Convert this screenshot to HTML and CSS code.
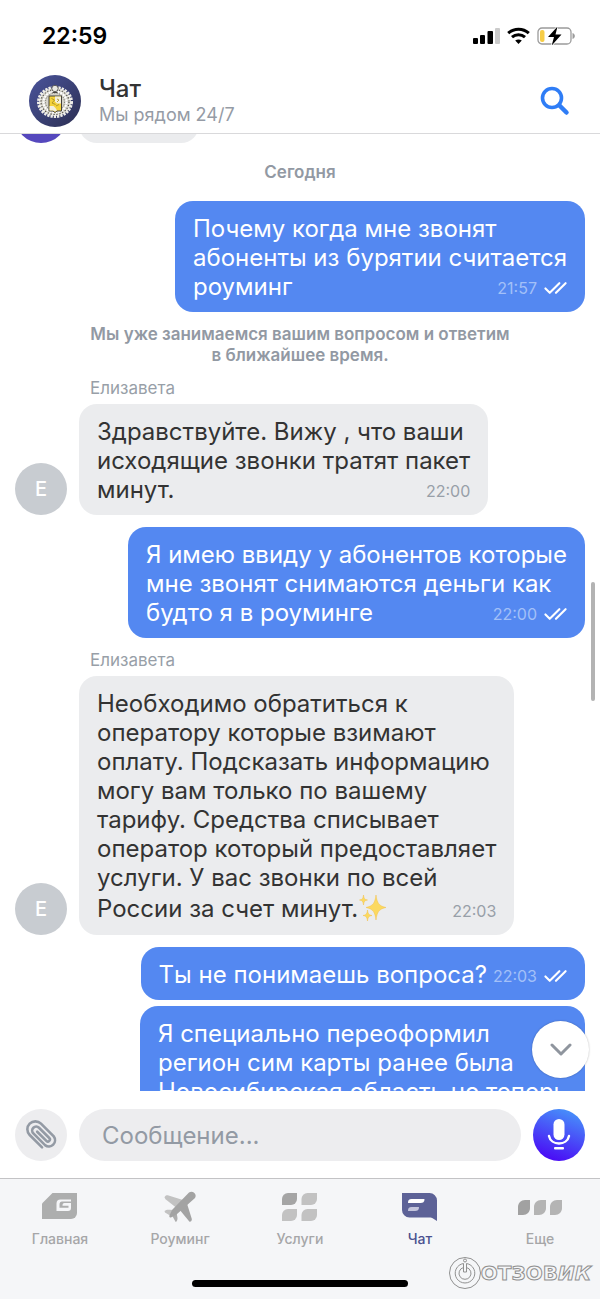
FILE: index.html
```
<!DOCTYPE html>
<html lang="ru">

<head>
  <meta charset="utf-8">
  <meta name="viewport" content="width=device-width">
  <title>Чат</title>
  <link rel="stylesheet" href="styles.css">
</head>

<body>

  <div class="status-bar">
    <span class="clock">22:59</span>
    <div class="status-icons">
      <svg width="27" height="18" viewBox="0 0 27 18">
        <rect x="0" y="11" width="5" height="6" rx="1"/>
        <rect x="7" y="8" width="5" height="9" rx="1"/>
        <rect x="14.500" y="4" width="5.500" height="13" rx="1"/>
        <rect x="22" y="1" width="5" height="16" rx="1" fill="#cbcbcb"/>
      </svg>
      <svg width="23" height="18" viewBox="0 0 23 18" fill="none" stroke="#000" stroke-width="3">
        <path d="M1.200 6.200C7 .8 16 .8 21.800 6.200"/>
        <path d="M5 10.200c3.700-3.400 9.300-3.400 13 0"/>
        <path d="M8.200 13.600c2-1.600 4.600-1.600 6.600 0L11.500 17z" fill="#000" stroke="none"/>
      </svg>
      <svg width="39" height="18" viewBox="0 0 39 18">
        <rect x="1" y="1" width="33" height="16" rx="4" fill="none" stroke="#9b9b9b" stroke-width="1.300"/>
        <rect x="3" y="3" width="4.500" height="12" rx="2" fill="#f7cd46"/>
        <path d="M35.500 6v6c1.600-.6 2.300-1.600 2.300-3s-.7-2.400-2.300-3z" fill="#9b9b9b"/>
        <path d="M20.500-.5 11 10h6l-2.300 8.500L24.500 7.500h-6z" stroke="#fff" stroke-width="1.500" paint-order="stroke"/>
      </svg>
    </div>
  </div>

  <header class="header">
    <svg class="logo" viewBox="0 0 52 52">
      <defs>
        <linearGradient id="logoBg" x1="0" y1="0" x2="1" y2="1">
          <stop offset="0" stop-color="#4a549c"/>
          <stop offset="1" stop-color="#2c2f52"/>
        </linearGradient>
      </defs>
      <circle cx="26" cy="26" r="26" fill="url(#logoBg)"/>
      <ellipse cx="26" cy="27" rx="16" ry="14" fill="#d5d3ca" stroke="#efeee8" stroke-width="4" stroke-dasharray="2.200 1"/>
      <ellipse cx="26" cy="27" rx="14" ry="12.500" fill="none" stroke="#4a4740" stroke-width="1.200" stroke-dasharray="1.200 1.800"/>
      <ellipse cx="26" cy="27" rx="11.500" ry="10.500" fill="none" stroke="#fff" stroke-width="2" stroke-dasharray="2 1"/>
      <ellipse cx="26" cy="27" rx="9.500" ry="9" fill="none" stroke="#6b6860" stroke-width="1" stroke-dasharray="1 1.500"/>
      <circle cx="26" cy="13.500" r="3.200" fill="#e9e8e2" stroke="#45433f" stroke-width=".8"/>
      <path d="M23.500 17.500h5" stroke="#45433f"/>
      <path d="M20 21h12.500v15H28l-2 1.500-2-1.500h-4z" fill="#f4d23c" stroke="#45423a"/>
      <path d="M26 21.500h6v7h-4l-2-2z" fill="#f3efdc"/>
      <path d="M20.500 31l4 0 2 2 1.500 2.500-2 1-2-1h-3.500z" fill="#f3efdc"/>
      <path d="M22.500 23.500l3 1.500-2.500 3 3.500 1.500M27 31l3-1.500M28 24l2 1-2 2" fill="none" stroke="#a38a20" stroke-width=".8"/>
    </svg>
    <div class="header-text">
      <h1>Чат</h1>
      <p>Мы рядом 24/7</p>
    </div>
    <button class="search" aria-label="Поиск">
      <svg width="30" height="30" viewBox="0 0 30 30" fill="none" stroke="#2f7df6" stroke-linecap="round">
        <circle cx="12" cy="12" r="9.500" stroke-width="3.600"/>
        <path d="M19.500 19.500l7 7" stroke-width="4.500"/>
      </svg>
    </button>
  </header>

  <!-- one check mark pair is shared by every sent message -->
  <svg class="defs">
    <symbol id="checks" viewBox="0 0 24 14">
      <path d="M1.500 7.500l4.500 4.500L16 2M12.500 12l10-10" fill="none" stroke="#fff" stroke-width="2.200" stroke-linecap="round" stroke-linejoin="round"/>
    </symbol>
  </svg>

  <main class="chat">
    <div class="messages">

      <div class="row cut">
        <span class="avatar purple"></span>
        <div class="bubble in short"></div>
      </div>

      <p class="note day">Сегодня</p>

      <div class="row sent">
        <div class="bubble out">Почему когда мне звонят<br>абоненты из бурятии считается<br>роуминг
          <span class="meta">21:57 <svg><use href="#checks"/></svg></span>
        </div>
      </div>

      <p class="note">Мы уже занимаемся вашим вопросом и ответим<br>в ближайшее время.</p>

      <p class="author">Елизавета</p>
      <div class="row">
        <span class="avatar">Е</span>
        <div class="bubble in">Здравствуйте. Вижу , что ваши<br>исходящие звонки тратят пакет<br>минут.
          <span class="meta">22:00</span>
        </div>
      </div>

      <div class="row sent">
        <div class="bubble out">Я имею ввиду у абонентов которые<br>мне звонят снимаются деньги как<br>будто я в роуминге
          <span class="meta">22:00 <svg><use href="#checks"/></svg></span>
        </div>
      </div>

      <p class="author">Елизавета</p>
      <div class="row">
        <span class="avatar">Е</span>
        <div class="bubble in">Необходимо обратиться к<br>оператору которые взимают<br>оплату. Подсказать информацию<br>могу вам только по вашему<br>тарифу. Средства списывает<br>оператор который предоставляет<br>услуги. У вас звонки по всей<br>России за счет минут.<svg class="sparkles" viewBox="0 0 30 30">
            <g fill="#fbd960" stroke="#f3c14b" stroke-width=".5">
              <path d="M18 2c1 8 3 11 10 12.500C21 16 19 19 18 27c-1-8-3-11-10-12.500C15 13 17 10 18 2z"/>
              <path d="M5.500 2c.5 3.500 1 4.500 4 5-3 .5-3.500 1.500-4 5-.5-3.500-1-4.500-4-5 3-.5 3.500-1.500 4-5z"/>
              <path d="M9.500 17c.5 4 1.500 5 4.500 5.500-3 .5-4 1.500-4.500 5.500-.5-4-1.500-5-4.500-5.500 3-.5 4-1.500 4.500-5.500z"/>
            </g>
          </svg>
          <span class="meta">22:03</span>
        </div>
      </div>

      <div class="row sent">
        <div class="bubble out">Ты не понимаешь вопроса?<span class="meta-space"></span>
          <span class="meta">22:03 <svg><use href="#checks"/></svg></span>
        </div>
      </div>

      <div class="row sent next">
        <div class="bubble out">Я специально переоформил<br>регион сим карты ранее была<br>Новосибирская область но теперь</div>
      </div>

    </div>

    <span class="scrollbar"></span>
    <button class="to-bottom" aria-label="Вниз">
      <svg width="24" height="14" viewBox="0 0 24 14" fill="none" stroke="#8f959e" stroke-width="3" stroke-linecap="round" stroke-linejoin="round">
        <path d="M3 2l9 9 9-9"/>
      </svg>
    </button>
  </main>

  <form class="composer" onsubmit="return false">
    <button type="button" class="attach" aria-label="Прикрепить файл">
      <svg width="32" height="32" viewBox="0 0 32 32" fill="none" stroke="#939aa4" stroke-width="2.600" stroke-linecap="round">
        <path transform="translate(16 16) rotate(45)" d="M9.500 8H-8A8 8 0 0 1-8-8H10A6.200 6.200 0 0 1 10 4.300H-6.500A4 4 0 0 1-6.500-3.700H8A2 2 0 0 1 8 .4H-5"/>
      </svg>
    </button>
    <input type="text" placeholder="Сообщение..." aria-label="Сообщение">
    <button class="mic" aria-label="Голосовое сообщение">
      <svg width="24" height="32" viewBox="0 0 24 32">
        <rect x="6.500" y="0" width="11" height="21" rx="5.500" fill="#fff"/>
        <path d="M2 17c2 10 18 10 20 0" fill="none" stroke="#fff" stroke-width="2.400" stroke-linecap="round"/>
        <rect x="7" y="28" width="10" height="2.500" rx="1" fill="#fff"/>
      </svg>
    </button>
  </form>

  <nav class="tabs">
    <a href="#">
      <svg width="36" height="32" viewBox="0 0 36 32">
        <path d="M0 12.500 10.500 2H35v20a6 6 0 0 1-6 6H0z" fill="#adaeae"/>
        <path d="M29 8.500H18.500a4 4 0 0 0-4 4V20H26a3 3 0 0 0 3-3v-5H22.500c-1.500 0-2 1-2 2.700H26.500v2H17.500v-3.200c0-2 1-3 2.500-3h9z" fill="#f5f6f8"/>
      </svg>
      Главная
    </a>
    <a href="#">
      <svg width="32" height="32" viewBox="0 0 32 32">
        <path d="M.5 6.500C1 4.300 3 4 4.500 4.400L19 9l-7 7.500L1.500 8.200z" fill="#c2c2c2"/>
        <path d="M.5 20c1.500-1.300 3.500-1.500 5-1.200L10 19l-4 5.500-5-3z" fill="#c2c2c2"/>
        <path d="M22.500 11l5.300 17c.2 1.500-.8 3-2.300 2.800L15 18z" fill="#a3a3a3"/>
        <path d="M8 24.500l4.500-3.500 1 6c0 2-.6 3.500-1.800 4z" fill="#adadad"/>
        <path d="M25 1.500c3.500-2.500 8.500 1.500 6 5.500L12.500 23.500 7 26.500c-1.500 0-2-1-1.500-2L8 19z" fill="#a3a3a3"/>
      </svg>
      Роуминг
    </a>
    <a href="#">
      <svg width="36" height="32" viewBox="0 0 36 32" fill="#c2c2c2">
        <path d="M0 14V8a6 6 0 0 1 6-6h9v6a6 6 0 0 1-6 6z" fill="#a5a5a5"/>
        <path d="M19.500 14V8a6 6 0 0 1 6-6H35v6a6 6 0 0 1-6 6z"/>
        <path d="M0 30v-6a6 6 0 0 1 6-6h9v6a6 6 0 0 1-6 6z"/>
        <path d="M19.500 30v-6a6 6 0 0 1 6-6H35v6a6 6 0 0 1-6 6z"/>
      </svg>
      Услуги
    </a>
    <a href="#" class="active">
      <svg width="36" height="32" viewBox="0 0 36 32">
        <path d="M0 2H27.500A7.500 7.500 0 0 1 35 9.500V30l-4-2.600c-1-.6-2-.9-3.500-.9H7.500A7.500 7.500 0 0 1 0 19z" fill="#5d6297"/>
        <path d="M9.500 8h13c0 3-1.500 4-4 4H6c0-3 1-4 3.500-4z" fill="#fff"/>
        <path d="M9.500 16H17c0 3-1.500 4-4 4H6c0-3 1-4 3.500-4z" fill="#c4c5dc"/>
      </svg>
      Чат
    </a>
    <a href="#">
      <svg width="44" height="32" viewBox="0 0 44 32" fill="#b4b4b4">
        <path d="M0 24v-8c0-4 3-7 7-7h5v8c0 4-3 7-7 7z" fill="#a1a1a1"/>
        <path d="M16 24v-8c0-4 3-7 7-7h5v8c0 4-3 7-7 7z"/>
        <path d="M32 24v-8c0-4 3-7 7-7h5v8c0 4-3 7-7 7z"/>
      </svg>
      Еще
    </a>
    <span class="home-indicator"></span>
    <div class="watermark">
      <svg width="32" height="32" viewBox="0 0 32 32" fill="none" stroke="#909090">
        <circle cx="16" cy="16" r="15.500"/>
        <path d="M14.500 6.500a9.800 9.800 0 1 0 3 0v4a6 6 0 1 1-3 0z"/>
        <path d="M14.500 8v7h3V8"/>
        <circle cx="16" cy="3.500" r="1.500"/>
      </svg>
      <span>ОТЗОВ<i>ИК</i></span>
    </div>
  </nav>

</body>

</html>
```

FILE: styles.css
```
* {
  box-sizing: border-box;
}

body {
  display: flex;
  flex-direction: column;
  height: 100vh;
  margin: 0;
  background-color: white;
  color: #333;
  font-family: Inter, "Liberation Sans", sans-serif;
}

h1, p {
  margin: 0;
}

button {
  display: flex;
  align-items: center;
  justify-content: center;
  flex-shrink: 0;
  padding: 0;
  border: none;
  background: none;
}

.defs {
  display: none;
}

.status-bar {
  display: flex;
  align-items: center;
  justify-content: space-between;
  height: 72px;
  padding: 0 24px 0 42px;
}

.clock {
  color: black;
  font-size: 23px;
  font-weight: 600;
}

.status-icons {
  display: flex;
  gap: 7px;
}

.header {
  display: flex;
  align-items: center;
  gap: 18px;
  height: 62px;
  padding: 0 30px 4px 29px;
  border-bottom: 1px solid #d9d9db;
  background-color: white;
  z-index: 1;
}

.logo {
  width: 52px;
  height: 52px;
}

.header-text {
  flex-grow: 1;
}

h1 {
  font-size: 24px;
  font-weight: 500;
  line-height: 28px;
}

.header p {
  color: #959ba5;
  font-size: 18px;
  line-height: 24px;
}

.chat {
  position: relative;
  flex: 1;
  min-height: 0;
}

.messages {
  height: 100%;
  padding: 0 15px;
  overflow: hidden;
}

.row {
  display: flex;
  align-items: flex-end;
  gap: 12px;
  margin-bottom: 12px;
}

.row.sent {
  justify-content: flex-end;
}

.row.next {
  margin-top: -6px;
}

/* tail of the previous day, scrolled under the header */
.row.cut {
  margin-top: -44px;
  margin-bottom: 19px;
}

.avatar {
  flex-shrink: 0;
  width: 52px;
  height: 52px;
  border-radius: 50%;
  background-color: #c8ccd1;
  color: white;
  font-size: 20px;
  font-weight: 500;
  line-height: 52px;
  text-align: center;
}

.avatar.purple {
  background-color: #5548bd;
}

.bubble {
  position: relative;
  padding: 13px 18px 11px;
  border-radius: 18px;
  font-size: 24px;
  line-height: 29px;
  white-space: nowrap;
}

.bubble.in {
  background-color: #ebecee;
}

.bubble.out {
  background-color: #5488f1;
  color: white;
}

.bubble.short {
  width: 120px;
  height: 53px;
}

.meta {
  position: absolute;
  right: 18px;
  bottom: 14px;
  display: flex;
  align-items: center;
  gap: 7px;
  color: #989fa8;
  font-size: 16px;
  line-height: 20px;
}

.out .meta {
  color: #a3c0f8;
}

.meta svg {
  width: 23px;
  height: 14px;
}

.meta-space {
  display: inline-block;
  width: 80px;
}

.sparkles {
  width: 30px;
  height: 32px;
  vertical-align: -7px;
}

.note {
  margin-bottom: 12px;
  color: #9299a3;
  font-size: 17px;
  font-weight: 600;
  line-height: 21px;
  text-align: center;
}

.note.day {
  margin-bottom: 18px;
}

.author {
  margin: 0 0 6px 75px;
  color: #989fa8;
  font-size: 17px;
  line-height: 20px;
}

.scrollbar {
  position: absolute;
  top: 448px;
  right: 5px;
  width: 4px;
  height: 119px;
  border-radius: 2px;
  background-color: #b3b3b3;
}

.to-bottom {
  position: absolute;
  right: 11px;
  bottom: 13px;
  width: 57px;
  height: 57px;
  border-radius: 50%;
  background-color: white;
  box-shadow: 0 0 2px rgba(0,0,0,0.3);
}

.composer {
  display: flex;
  gap: 12px;
  padding: 18px 15px 17px;
}

.composer input {
  flex: 1;
  min-width: 0;
  height: 52px;
  padding: 0 23px;
  border: none;
  border-radius: 26px;
  background-color: #ededef;
  font-family: inherit;
  font-size: 24px;
}

.composer input::placeholder {
  color: #939aa4;
}

.attach, .mic {
  width: 52px;
  height: 52px;
  border-radius: 50%;
}

.attach {
  background-color: #ededef;
}

.mic {
  background: linear-gradient(200deg, #4797fa 5%, #4a0af5 90%);
}

.tabs {
  position: relative;
  display: flex;
  height: 121px;
  padding-top: 12px;
  border-top: 1px solid #c3c3c5;
  background-color: #f5f6f8;
}

.tabs a {
  display: flex;
  flex: 1;
  flex-direction: column;
  align-items: center;
  gap: 6px;
  color: #a6a6a8;
  font-size: 14px;
  font-weight: 500;
  line-height: 20px;
  text-decoration: none;
}

.tabs a.active {
  color: #4b5190;
}

.home-indicator {
  position: absolute;
  bottom: 12px;
  left: 32%;
  width: 36%;
  height: 7px;
  border-radius: 4px;
  background-color: black;
}

.watermark {
  position: absolute;
  right: 9px;
  bottom: 10px;
  display: flex;
  align-items: center;
  color: #f5f6f8;
  font-family: "DejaVu Sans", sans-serif;
  font-size: 20px;
  font-weight: bold;
  -webkit-text-stroke: 1px #909090;
}
```
